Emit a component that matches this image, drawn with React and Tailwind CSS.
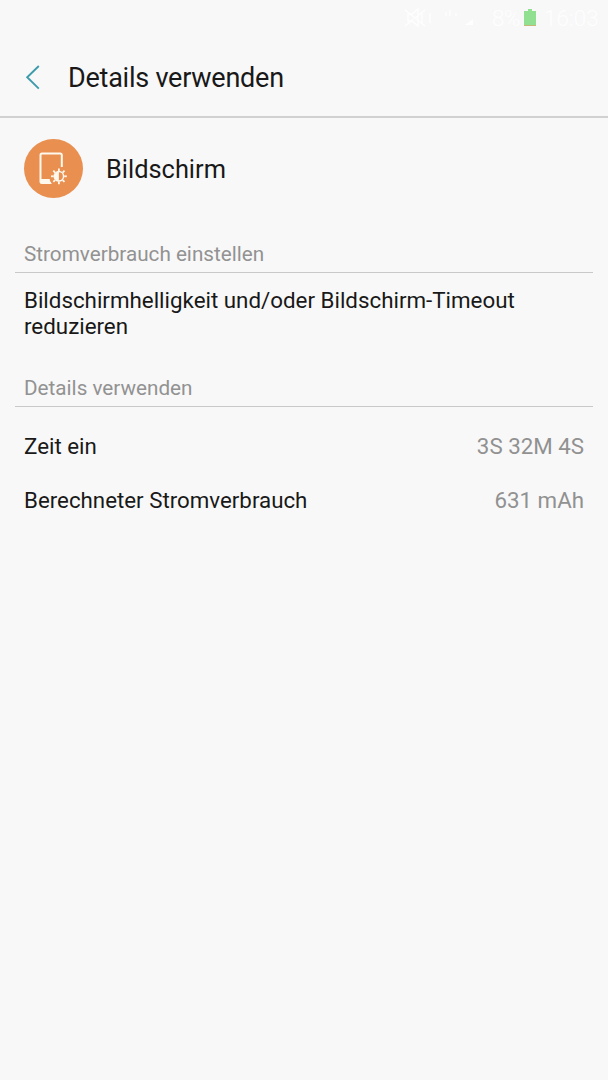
const details = [
  { label: "Zeit ein", value: "3S 32M 4S" },
  { label: "Berechneter Stromverbrauch", value: "631 mAh" },
];

const rays = [0, 45, 90, 135, 180, 225, 270, 315];

function StatusBar() {
  return (
    <div className="flex h-9 items-center justify-end pr-2 text-[22.5px] font-light text-[#fefefe]">
      <svg className="mr-2 h-9 w-[84px]" viewBox="0 0 84 36" fill="none" stroke="currentColor" strokeWidth="1.4">
        <path d="M8 14h4l6-5v17l-6-5H8zM5 10l20 16M25 10L5 26M22 13v10M30 13v10" />
        <path d="M46 16v-4M50 16v-6M56 16v-3" />
        <path d="M73 19v6h-8z" fill="currentColor" stroke="none" />
      </svg>
      <span className="w-7 leading-9 tracking-tight">8%</span>
      <svg className="ml-1 h-9 w-3" viewBox="0 0 12 36">
        <path d="M4 9h4v2h4v14H0V11h4z" fill="#91df91" />
        <path d="M0 25h12v1H0z" fill="#c5b778" />
      </svg>
      <span className="ml-2 w-[56px] leading-9">16:03</span>
    </div>
  );
}

function ScreenIcon() {
  return (
    <div className="flex h-[59px] w-[59px] shrink-0 items-center justify-center rounded-full bg-[#e98f50]">
      <svg className="h-[59px] w-[59px]" viewBox="0 0 59 59" fill="none">
        <path d="M37.8 28V16a1.5 1.5 0 0 0-1.5-1.5H18a1.5 1.5 0 0 0-1.5 1.5v26.5A1.5 1.5 0 0 0 18 44h9" stroke="#fff8ed" strokeWidth="2" />
        <path d="M16.5 40h9.2c.2 2 1 3.5 2.2 5H18l-1.5-1.5z" fill="#fff8ed" />
        <circle cx="34.9" cy="37.3" r="4.7" stroke="#fff8ed" strokeWidth="1.5" />
        <path d="M34.9 32.6a4.7 4.7 0 0 0 0 9.4z" fill="#fff8ed" />
        {rays.map((angle) => (
          <path key={angle} d="M34.9 32v-2.6" stroke="#fff8ed" strokeWidth="1.8" transform={`rotate(${angle} 34.9 37.3)`} />
        ))}
      </svg>
    </div>
  );
}

function SectionTitle({ children }) {
  return (
    <h2 className="mx-[15px] h-8 border-b border-[#c9c9c9] pl-[9px] text-[20.7px] leading-[26px] text-[#929292]">
      {children}
    </h2>
  );
}

export default function App() {
  return (
    <div className="min-h-screen bg-[#f8f8f8] font-['Roboto',sans-serif] text-[#191919]">
      <StatusBar />

      <header className="flex h-[82px] items-center border-b-2 border-[#d1d1d1]">
        <svg className="mt-px ml-6 h-7 w-4" viewBox="0 0 16 28" fill="none" stroke="#3d9cab" strokeWidth="1.9">
          <path d="M14.8 3L3.2 14.2l11.6 11.4" />
        </svg>
        <h1 className="ml-7 pt-1 text-[27px] leading-8 tracking-[-0.24px]">Details verwenden</h1>
      </header>

      <main>
        <div className="flex items-center px-6 pt-[21px]">
          <ScreenIcon />
          <span className="ml-[23px] pt-px text-[25.4px] leading-8">Bildschirm</span>
        </div>

        <section className="pt-[43px]">
          <SectionTitle>Stromverbrauch einstellen</SectionTitle>
          <p className="px-6 pt-3.5 text-[22.35px] leading-[26px]">
            Bildschirmhelligkeit und/oder Bildschirm-Timeout reduzieren
          </p>
        </section>

        <section className="pt-9">
          <SectionTitle>Details verwenden</SectionTitle>
          <dl className="pt-[13px] text-[22.3px]">
            {details.map((item) => (
              <div key={item.label} className="flex h-[54px] items-center justify-between px-6">
                <dt>{item.label}</dt>
                <dd className="text-[#919191]">{item.value}</dd>
              </div>
            ))}
          </dl>
        </section>
      </main>
    </div>
  );
}
